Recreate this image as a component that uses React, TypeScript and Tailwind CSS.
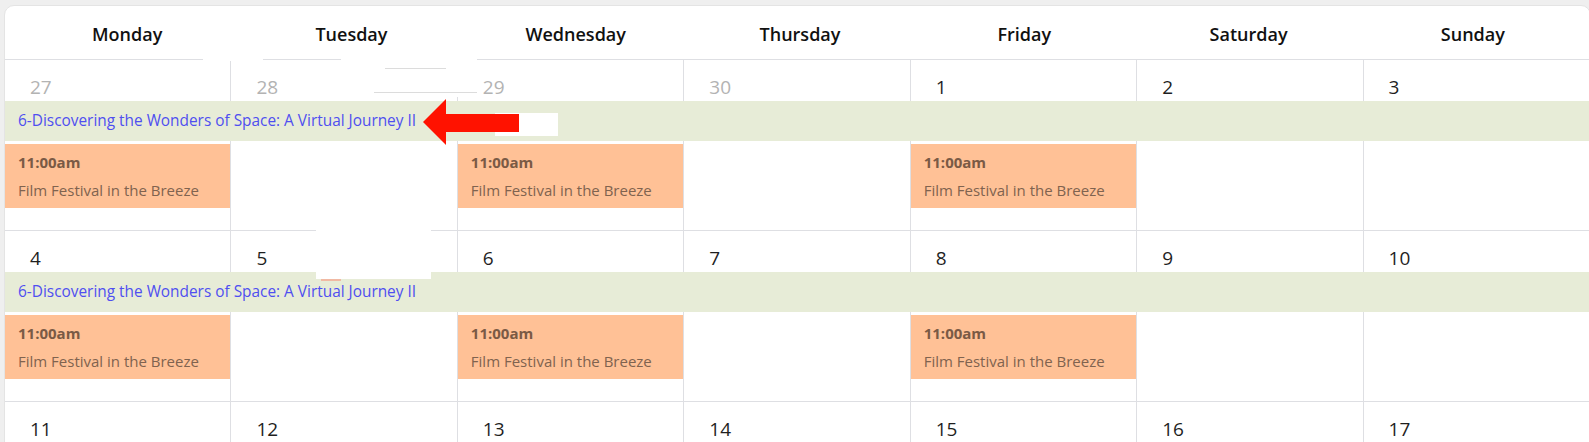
import React from "react";

const DAYS = ["Monday", "Tuesday", "Wednesday", "Thursday", "Friday", "Saturday", "Sunday"];

interface Week {
  dates: { n: number; muted?: boolean }[];
  band?: string;
  events: boolean[];
}

const WEEKS: Week[] = [
  {
    dates: [
      { n: 27, muted: true },
      { n: 28, muted: true },
      { n: 29, muted: true },
      { n: 30, muted: true },
      { n: 1 },
      { n: 2 },
      { n: 3 },
    ],
    band: "6-Discovering the Wonders of Space: A Virtual Journey II",
    events: [true, false, true, false, true, false, false],
  },
  {
    dates: [4, 5, 6, 7, 8, 9, 10].map((n) => ({ n })),
    band: "6-Discovering the Wonders of Space: A Virtual Journey II",
    events: [true, false, true, false, true, false, false],
  },
  {
    dates: [11, 12, 13, 14, 15, 16, 17].map((n) => ({ n })),
    events: [false, false, false, false, false, false, false],
  },
];

const EventCard: React.FC = () => (
  <div className="mt-[3px] h-[64px] bg-[#ffc196] pl-[13px] pt-[7px]">
    <p className="text-[15px] leading-[22px] font-bold text-[#7a5a45]">11:00am</p>
    <p className="mt-[6px] text-[15px] leading-[22px] text-[#80634f]">Film Festival in the Breeze</p>
  </div>
);

const WeekRow: React.FC<{ week: Week }> = ({ week }) => (
  <div className="border-b border-[#dedfe3]">
    <div className="grid grid-cols-7 h-[41px]">
      {week.dates.map((d, i) => (
        <div
          key={i}
          className={`pl-[25px] pt-[15px] text-[19px] leading-[24px] ${i < 6 ? "border-r border-[#dedfe3]" : ""} ${
            d.muted ? "text-[#b3b3b3]" : "text-[#1f1f1f]"
          }`}
        >
          {d.n}
        </div>
      ))}
    </div>
    {week.band && (
      <div className="h-10 bg-[#e7ecd7] pl-[13px] flex items-center text-[15.4px] text-[#4f4ff0]">
        {week.band}
      </div>
    )}
    <div className="grid grid-cols-7 h-[89px]">
      {week.events.map((has, i) => (
        <div key={i} className={i < 6 ? "border-r border-[#dedfe3]" : ""}>
          {has && <EventCard />}
        </div>
      ))}
    </div>
  </div>
);

export default function App() {
  return (
    <div
      className="relative w-full h-[442px] overflow-hidden bg-[#efefef] pt-[5px] pl-[4px]"
      style={{ fontFamily: '"Open Sans", "Noto Sans", Arial, sans-serif' }}
    >
      <div className="w-[1587px] rounded-t-[10px] border border-[#e4e4e4] bg-white">
        <div className="grid grid-cols-7 h-[54px] pl-[10px] pr-[5px] border-b border-[#dedfe3]">
          {DAYS.map((d) => (
            <div key={d} className="flex items-center justify-center pt-[3px] text-[18px] font-semibold text-[#111]">
              {d}
            </div>
          ))}
        </div>
        {WEEKS.map((w, i) => (
          <WeekRow key={i} week={w} />
        ))}
      </div>

      {/* leftover paste marks over the screenshot */}
      <div className="absolute left-[203px] top-[57px] w-[60px] h-[4px] bg-white" />
      <div className="absolute left-[341px] top-[57px] w-[136px] h-[40px] bg-white" />
      <div className="absolute left-[385px] top-[68px] w-[61px] h-px bg-[#dcdcdc]" />
      <div className="absolute left-[374px] top-[92px] w-[103px] h-px bg-[#dcdcdc]" />
      <div className="absolute left-[495px] top-[113px] w-[63px] h-[23px] bg-white" />
      <div className="absolute left-[316px] top-[228px] w-[115px] h-[51px] bg-white" />
      <div className="absolute left-[321px] top-[279px] w-[20px] h-[2px] bg-[#f1b9a3]" />

      <svg className="absolute left-0 top-0" width="600" height="160" viewBox="0 0 600 160">
        <polygon points="423,122 446,99 446,114 519,114 519,132 446,132 446,145" fill="#ff1200" />
      </svg>
    </div>
  );
}
